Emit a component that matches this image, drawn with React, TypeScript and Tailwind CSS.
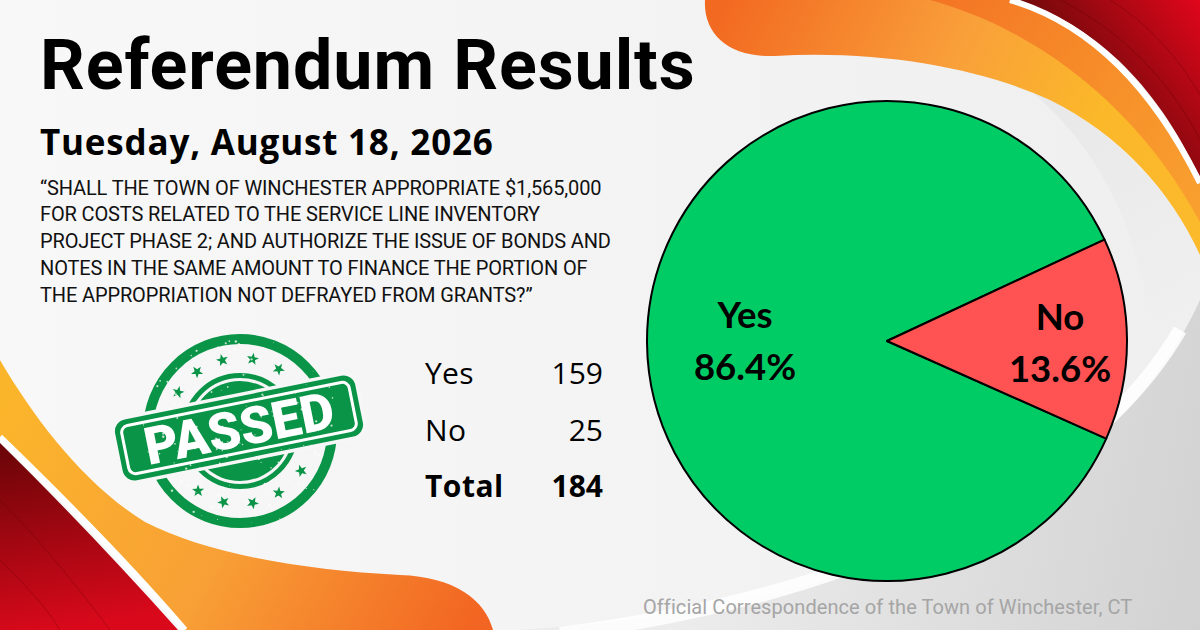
import React from "react";

const G = "#0a9447";

function starPoints(cx: number, cy: number, R: number, r: number, rot: number) {
  const pts: string[] = [];
  for (let i = 0; i < 10; i++) {
    const a = ((rot - 90 + i * 36) * Math.PI) / 180;
    const rad = i % 2 === 0 ? R : r;
    pts.push(`${(cx + rad * Math.cos(a)).toFixed(2)},${(cy + rad * Math.sin(a)).toFixed(2)}`);
  }
  return pts.join(" ");
}

const STAR_ANGLES = [-148, -126, -104, -80, -58, 33, 58, 80, 103, 125];

function makeSpecks() {
  let s = 987654;
  const rnd = () => {
    s = (s * 1103515245 + 12345) % 2147483648;
    return s / 2147483648;
  };
  const out: { x: number; y: number; r: number }[] = [];
  for (let i = 0; i < 200; i++) {
    const a = rnd() * Math.PI * 2;
    const d = Math.sqrt(rnd()) * 100;
    out.push({ x: 135 + d * Math.cos(a), y: 105 + d * Math.sin(a), r: 0.35 + rnd() * 0.9 });
  }
  return out;
}
const SPECKS = makeSpecks();

function Stamp() {
  const cx = 135;
  const cy = 105;
  return (
    <svg width="270" height="210" viewBox="0 0 270 210" className="ml-[65px] shrink-0">
      <circle cx={cx} cy={cy} r={92} fill="none" stroke={G} strokeWidth={10} />
      {STAR_ANGLES.map((a, i) => {
        const rad = (a * Math.PI) / 180;
        const x = cx + 73 * Math.cos(rad);
        const y = cy + 73 * Math.sin(rad);
        return <polygon key={i} points={starPoints(x, y, 6.4, 2.6, a + 90)} fill={G} />;
      })}
      <circle cx={cx} cy={cy} r={55.5} fill="none" stroke={G} strokeWidth={5} />
      <circle cx={cx} cy={cy} r={50} fill={G} />
      <g transform="rotate(-11.4 134 102)">
        <rect x={134 - 126} y={102 - 34.5} width={252} height={69} rx={15} fill="#f7f7f7" />
        <rect x={134 - 122.5} y={102 - 31} width={245} height={62} rx={12} fill={G} />
        <rect x={134 - 116} y={102 - 24.5} width={232} height={49} rx={7} fill="none" stroke="#ffffff" strokeWidth={3} />
        <text
          x={134}
          y={102 + 18.5}
          textAnchor="middle"
          fontFamily="Roboto, sans-serif"
          fontWeight={900}
          fontSize={52}
          fill="#ffffff"
          textLength={192}
          lengthAdjust="spacingAndGlyphs"
        >
          PASSED
        </text>
      </g>
      {SPECKS.map((p, i) => (
        <circle key={i} cx={p.x} cy={p.y} r={p.r} fill="#ffffff" opacity={0.75} />
      ))}
    </svg>
  );
}

function Pie() {
  const c = 242;
  const R = 240;
  const pt = (deg: number) => {
    const a = (deg * Math.PI) / 180;
    return `${(c + R * Math.cos(a)).toFixed(2)} ${(c + R * Math.sin(a)).toFixed(2)}`;
  };
  const a1 = -25;
  const a2 = 24;
  return (
    <svg width="484" height="484" viewBox="0 0 484 484" className="ml-[2px] shrink-0">
      <path d={`M ${c} ${c} L ${pt(a2)} A ${R} ${R} 0 1 1 ${pt(a1)} Z`} fill="#00cc66" stroke="#000" strokeWidth={2} strokeLinejoin="round" />
      <path d={`M ${c} ${c} L ${pt(a1)} A ${R} ${R} 0 0 1 ${pt(a2)} Z`} fill="#ff5252" stroke="#000" strokeWidth={2} strokeLinejoin="round" />
      <g fontFamily="Lato, sans-serif" fontWeight={700} fontSize={36.5} fill="#000" textAnchor="middle">
        <text x={100} y={229}>Yes</text>
        <text x={100} y={281}>86.4%</text>
        <text x={415} y={231}>No</text>
        <text x={415} y={283}>13.6%</text>
      </g>
    </svg>
  );
}

function Background() {
  return (
    <svg className="absolute inset-0 pointer-events-none" width="1200" height="630" viewBox="0 0 1200 630">
      <defs>
        <linearGradient id="bg" x1="0" y1="0" x2="1" y2="0">
          <stop offset="0" stopColor="#f8f8f8" />
          <stop offset="1" stopColor="#efefef" />
        </linearGradient>
        <linearGradient id="grayBR" x1="700" y1="520" x2="1200" y2="620" gradientUnits="userSpaceOnUse">
          <stop offset="0" stopColor="#ececec" />
          <stop offset="1" stopColor="#d2d2d2" />
        </linearGradient>
        <linearGradient id="grayTR" x1="1040" y1="100" x2="1180" y2="330" gradientUnits="userSpaceOnUse">
          <stop offset="0" stopColor="#e6e6e6" />
          <stop offset="1" stopColor="#f0f0f0" />
        </linearGradient>
        <linearGradient id="orTop" x1="720" y1="20" x2="1180" y2="240" gradientUnits="userSpaceOnUse">
          <stop offset="0" stopColor="#f26a21" />
          <stop offset="0.45" stopColor="#f9a03a" />
          <stop offset="0.75" stopColor="#fbb829" />
          <stop offset="1" stopColor="#fbb92c" />
        </linearGradient>
        <linearGradient id="orTop2" x1="940" y1="0" x2="1200" y2="200" gradientUnits="userSpaceOnUse">
          <stop offset="0" stopColor="#f36f21" />
          <stop offset="1" stopColor="#f89b30" />
        </linearGradient>
        <linearGradient id="redTop" x1="1080" y1="90" x2="1200" y2="0" gradientUnits="userSpaceOnUse">
          <stop offset="0" stopColor="#6e0a0a" />
          <stop offset="1" stopColor="#e0061b" />
        </linearGradient>
        <linearGradient id="orBot" x1="20" y1="380" x2="470" y2="630" gradientUnits="userSpaceOnUse">
          <stop offset="0" stopColor="#fbb52b" />
          <stop offset="0.5" stopColor="#f8a036" />
          <stop offset="1" stopColor="#f26522" />
        </linearGradient>
        <linearGradient id="redBot" x1="30" y1="450" x2="60" y2="630" gradientUnits="userSpaceOnUse">
          <stop offset="0" stopColor="#6e0508" />
          <stop offset="1" stopColor="#d9091b" />
        </linearGradient>
      </defs>
      <rect width="1200" height="630" fill="url(#bg)" />
      <path d="M1030 90 C 1100 150 1140 230 1150 330 L 1200 330 L 1200 250 C 1160 180 1110 130 1050 100 Z" fill="url(#grayTR)" opacity={0.8} />
      <path d="M520 630 C 820 610 1100 520 1200 300 L 1200 630 Z" fill="url(#grayBR)" />
      <path d="M560 634 C 830 600 1080 500 1180 330" fill="none" stroke="#ffffff" strokeWidth={14} opacity={0.85} />

      {/* top right */}
      <path
        d="M705 0 C 703 35 730 58 775 56 C 880 50 980 68 1050 100 C 1120 135 1170 190 1200 255 L 1200 183 C 1150 82 1085 22 1010 0 Z"
        fill="url(#orTop)"
      />
      <path d="M930 0 C 1040 30 1140 110 1200 222 L 1200 183 C 1150 82 1085 22 1010 0 Z" fill="url(#orTop2)" opacity={0.85} />
      <path d="M1013 0 C 1088 20 1155 80 1200 178 L 1200 0 Z" fill="url(#redTop)" />
      <path d="M1060 0 C 1120 30 1170 80 1200 140" fill="none" stroke="#5a0000" strokeWidth={1} opacity={0.35} />
      <path d="M1110 0 C 1150 25 1180 60 1200 95" fill="none" stroke="#5a0000" strokeWidth={1} opacity={0.3} />
      <path d="M1010 0 C 1085 22 1150 82 1200 183" fill="none" stroke="#ffffff" strokeWidth={6} />

      {/* bottom left */}
      <path
        d="M0 360 C 35 420 85 485 145 522 C 205 553 300 570 400 575 C 455 577 485 600 493 630 L 185 630 C 125 560 60 495 0 437 Z"
        fill="url(#orBot)"
      />
      <path d="M0 443 C 58 500 120 565 178 630 L 0 630 Z" fill="url(#redBot)" />
      <path d="M0 500 C 40 540 80 590 110 630" fill="none" stroke="#5a0000" strokeWidth={1} opacity={0.3} />
      <path d="M0 560 C 25 585 45 605 60 630" fill="none" stroke="#5a0000" strokeWidth={1} opacity={0.3} />
      <path d="M0 437 C 60 495 125 560 185 630" fill="none" stroke="#ffffff" strokeWidth={6} />
    </svg>
  );
}

export default function App() {
  const rows = [
    { label: "Yes", value: "159", bold: false },
    { label: "No", value: "25", bold: false },
    { label: "Total", value: "184", bold: true },
  ];
  return (
    <div className="relative w-[1200px] h-[630px] overflow-hidden bg-[#f6f6f6]">
      <Background />
      <div className="relative flex h-full">
        <div className="w-[643px] shrink-0 pl-[40px] flex flex-col">
          <h1 className="mt-[30px] font-['Roboto',sans-serif] font-bold text-[70px] leading-[70px] tracking-[0.9px] text-black whitespace-nowrap">
            Referendum Results
          </h1>
          <h2 className="mt-[22px] font-['Open_Sans',sans-serif] font-bold text-[35px] leading-[40px] tracking-[0.8px] text-black whitespace-nowrap">
            Tuesday, August 18, 2026
          </h2>
          <p className="mt-[12.5px] font-['Roboto',sans-serif] text-[20px] leading-[26.75px] tracking-[-0.13px] text-[#111111] whitespace-nowrap">
            “SHALL THE TOWN OF WINCHESTER APPROPRIATE $1,565,000
            <br />
            FOR COSTS RELATED TO THE SERVICE LINE INVENTORY
            <br />
            PROJECT PHASE 2; AND AUTHORIZE THE ISSUE OF BONDS AND
            <br />
            NOTES IN THE SAME AMOUNT TO FINANCE THE PORTION OF
            <br />
            THE APPROPRIATION NOT DEFRAYED FROM GRANTS?”
          </p>
          <div className="mt-[17.75px] flex items-start">
            <Stamp />
            <div className="ml-[50px] mt-[19px] grid w-[178px] grid-cols-[1fr_auto] font-['Open_Sans',sans-serif] text-[30px] leading-[56.5px] text-black">
              {rows.map((r) => (
                <React.Fragment key={r.label}>
                  <span className={r.bold ? "font-bold tracking-[0.5px]" : "font-normal tracking-[0.3px]"}>{r.label}</span>
                  <span className={r.bold ? "text-right font-bold" : "text-right font-normal"}>{r.value}</span>
                </React.Fragment>
              ))}
            </div>
          </div>
        </div>
        <div className="flex flex-col pt-[99px]">
          <Pie />
          <p className="mt-[11.6px] font-['Roboto',sans-serif] text-[20px] leading-[24px] tracking-[0.08px] text-[#a5a5a5] whitespace-nowrap">
            Official Correspondence of the Town of Winchester, CT
          </p>
        </div>
      </div>
    </div>
  );
}
